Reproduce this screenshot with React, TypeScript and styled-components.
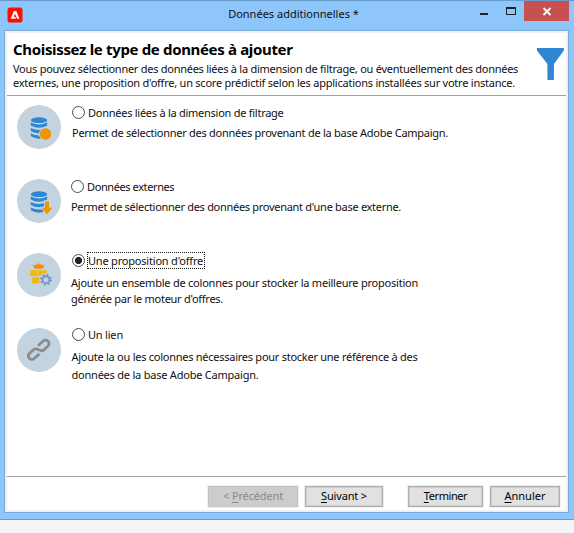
import React from 'react';
import styled, { createGlobalStyle } from 'styled-components';

const GlobalStyle = createGlobalStyle`
  * { box-sizing: border-box; }
  body {
    margin: 0;
    background: #f5f5f5;
    color: #101010;
    font: 11px/16px 'Noto Sans', 'Open Sans', sans-serif;
    overflow: hidden;
  }
`;

const Window = styled.main`
  width: 574px;
  height: 520px;
  display: flex;
  flex-direction: column;
  background: #8cc6fb;
  border-top: 1px solid #6b9bcb;
  border-bottom: 1px solid #6b9bcb;
  padding: 0 5px 6px 4px;
`;

const TitleBar = styled.header`
  height: 29px;
  flex: none;
  display: grid;
  grid-template-columns: 130px 1fr 130px;
`;

const AppLogo = styled.svg`
  width: 16px;
  height: 16px;
  margin: 6px 0 0 3px;
`;

const WindowTitle = styled.div`
  padding: 5px 0 0 14px;
  justify-self: center;
  white-space: nowrap;
`;

const WindowControls = styled.div`
  display: flex;
  justify-content: flex-end;
  align-items: flex-start;
`;

const ControlIcons = styled.svg`
  width: 50px;
  height: 20px;
`;

const CloseButton = styled.button`
  width: 45px;
  height: 20px;
  padding: 0;
  border: 0;
  background: #c75050;
  svg { display: block; }
`;

const Panel = styled.section`
  flex: 1;
  display: flex;
  flex-direction: column;
  border: 1px solid #7aaad8;
  background: #f0f0f0;
  padding: 2px;
`;

const Body = styled.div`
  flex: 1;
  display: flex;
  flex-direction: column;
  background: #fff;
`;

const Intro = styled.div`
  height: 63px;
  flex: none;
  display: flex;
  justify-content: space-between;
  border-bottom: 1px solid #a0a0a0;
  padding: 6px 0 0 6px;
`;

const Heading = styled.h1`
  margin: 0;
  font-size: 15px;
  line-height: 20px;
  letter-spacing: -0.34px;
  color: #000;
  white-space: nowrap;
`;

const IntroText = styled.div`
  padding-top: 3px;
  line-height: 14px;
`;

const Line = styled.div<{ $tracking: number }>`
  letter-spacing: ${(p) => p.$tracking}px;
  white-space: nowrap;
`;

const Funnel = styled.svg`
  width: 30px;
  height: 34px;
  margin-top: 8px;
  flex: none;
`;

const Options = styled.div`
  flex: 1;
  padding: 9px 0 0 10px;
`;

const Option = styled.div<{ $height: number }>`
  display: flex;
  gap: 10px;
  height: ${(p) => p.$height}px;
`;

const OptionIcon = styled.svg`
  width: 44px;
  height: 44px;
  flex: none;
`;

const OptionContent = styled.div<{ $lift: number }>`
  margin-top: -${(p) => p.$lift}px;
`;

const RadioLabel = styled.label<{ $indent: number }>`
  display: flex;
  align-items: center;
  gap: 2px;
  height: 17px;
  padding-left: ${(p) => p.$indent}px;
`;

const Radio = styled.input`
  appearance: none;
  width: 13px;
  height: 13px;
  margin: 0;
  border: 1px solid #4a4a4a;
  border-radius: 50%;
  background: #fff;
  outline: none;
  &:checked { background: radial-gradient(circle, #222 0 3.2px, #fff 3.9px); }
`;

const LabelText = styled.span<{ $tracking: number; $focused?: boolean }>`
  letter-spacing: ${(p) => p.$tracking}px;
  white-space: nowrap;
  height: 17px;
  line-height: 15px;
  border: 1px dotted ${(p) => (p.$focused ? '#111' : 'transparent')};
  ${(p) => p.$focused && 'width: 118px;'}
`;

const Description = styled.div<{ $top: number; $leading: number; $indent: number }>`
  margin-top: ${(p) => p.$top}px;
  padding-left: ${(p) => p.$indent}px;
  line-height: ${(p) => p.$leading}px;
`;

const Footer = styled.footer`
  height: 34px;
  flex: none;
  display: flex;
  justify-content: flex-end;
  border-top: 1px solid #a0a0a0;
  padding: 9px 6px 3px 0;
  gap: 7px;
`;

const Button = styled.button<{ $width: number; $tracking: number; $apart?: boolean }>`
  width: ${(p) => p.$width}px;
  height: 21px;
  margin-left: ${(p) => (p.$apart ? 18 : 0)}px;
  padding: 0 0 1px;
  border: 1px solid #adadad;
  box-shadow: 0 0 0 1px #f0f0f0, inset 0 0 0 1px #cfcfcf;
  background: #e1e1e1;
  color: #000;
  font: inherit;
  letter-spacing: ${(p) => p.$tracking}px;
  text-underline-offset: 2px;
  &:disabled {
    background: #ccc;
    border-color: #c2c2c2;
    color: #8a8a8a;
  }
`;

const Disc = () => <circle cx="22" cy="22" r="22" fill="#c3d4e0" />;

const Database = () => (
  <g fill="#2f86d1">
    <ellipse cx="22" cy="15.2" rx="8.2" ry="2.9" />
    <path d="M13.8 17.5q8.2 4.2 16.4 0v3q-8.2 4.4-16.4 0z" />
    <path d="M13.8 22.9q8.2 4.2 16.4 0v3.2q-8.2 4.4-16.4 0z" />
    <path d="M13.8 28.5q8.2 4.2 16.4 0v2.8q-8.2 4.8-16.4 0z" />
  </g>
);

const LinkedDataIcon = () => (
  <OptionIcon viewBox="0 0 44 44">
    <Disc />
    <Database />
    <circle cx="28.5" cy="29" r="6.2" fill="#f29400" stroke="#c3d4e0" />
  </OptionIcon>
);

const ExternalDataIcon = () => (
  <OptionIcon viewBox="0 0 44 44">
    <Disc />
    <Database />
    <path
      d="M28 22.5h4v6.2h3.2L30 35.2l-5.2-6.5H28z"
      fill="#f29400"
      stroke="#c3d4e0"
      strokeWidth="2"
      paintOrder="stroke"
    />
  </OptionIcon>
);

const OfferIcon = () => (
  <OptionIcon viewBox="0 0 44 44">
    <Disc />
    <path d="M17.8 15.8l-2.4-4 3.1 1 .4-2 1.5 1.2 1.2-2.2 1.2 2.2 1.5-1.2.4 2 3.1-1-2.4 4z" fill="#ee8c0c" />
    <path d="M13.2 17.3h6.9v5.8h-6.9zM21.2 17.3h8.6v3.4h-4.2v2.4h-4.4zM15.2 24.2h7.3v6.4h-7.3z" fill="#f2b90a" />
    <path d="M20.1 17.3h1.1v5.8h-1.1z" fill="#dfc04c" />
    <circle cx="29" cy="26.7" r="6.7" fill="#c3d4e0" />
    <g fill="none" stroke="#7595c8">
      <circle cx="29" cy="26.7" r="3.5" strokeWidth="1.9" />
      <circle cx="29" cy="26.7" r="5" strokeWidth="1.8" strokeDasharray="1.96 1.967" />
    </g>
  </OptionIcon>
);

const LinkIcon = () => (
  <OptionIcon viewBox="0 0 44 44">
    <Disc />
    <g transform="translate(21.7 21.8) rotate(-42)" fill="none" stroke="#8b8b8b" strokeWidth="2.8">
      <path d="M-2.2 3.5h-7a3.5 3.5 0 0 1 0-7h5.4a3.5 3.5 0 0 1 3.5 3.7" />
      <path d="M2.2-3.5h7a3.5 3.5 0 0 1 0 7H3.8A3.5 3.5 0 0 1 .3-.2" />
    </g>
  </OptionIcon>
);

type TextLine = [text: string, tracking: number];

interface OptionData {
  icon: React.ReactNode;
  label: TextLine;
  lines: TextLine[];
  height: number;
  lift: number;
  radioIndent: number;
  textIndent: number;
  top: number;
  leading: number;
  selected?: boolean;
}

const options: OptionData[] = [
  {
    icon: <LinkedDataIcon />,
    label: ['Données liées à la dimension de filtrage', -0.26],
    lines: [['Permet de sélectionner des données provenant de la base Adobe Campaign.', -0.26]],
    height: 74, lift: 1, radioIndent: 1, textIndent: 1, top: 4, leading: 16,
  },
  {
    icon: <ExternalDataIcon />,
    label: ['Données externes', -0.4],
    lines: [["Permet de sélectionner des données provenant d'une base externe.", -0.295]],
    height: 74, lift: 1, radioIndent: 0, textIndent: 0, top: 4, leading: 16,
  },
  {
    icon: <OfferIcon />,
    label: ["Une proposition d'offre", -0.2],
    lines: [
      ['Ajoute un ensemble de colonnes pour stocker la meilleure proposition', -0.228],
      ["générée par le moteur d'offres.", -0.28],
    ],
    height: 75, lift: 1, radioIndent: 1, textIndent: 0, top: 6, leading: 16, selected: true,
  },
  {
    icon: <LinkIcon />,
    label: ['Un lien', -0.2],
    lines: [
      ['Ajoute la ou les colonnes nécessaires pour stocker une référence à des', -0.26],
      ['données de la base Adobe Campaign.', -0.22],
    ],
    height: 60, lift: 2, radioIndent: 1, textIndent: 0.5, top: 5, leading: 18,
  },
];

export default function App() {
  return (
    <>
      <GlobalStyle />
      <Window>
        <TitleBar>
          <AppLogo viewBox="0 0 16 16">
            <rect x=".5" y=".5" width="15" height="15" rx="2.5" fill="#fa0f00" />
            <path d="M3.7 11.8L6.8 3.9h2.5l3.1 7.9h-2.3L8 6.8l-1.2 3h1.5l.8 2z" fill="#fff" />
          </AppLogo>
          <WindowTitle>Données additionnelles *</WindowTitle>
          <WindowControls>
            <ControlIcons viewBox="0 0 50 20">
              <path d="M6 12h8v2H6zM32 6h10v8H32zm1 2v5h8V8z" fill="#222" fillRule="evenodd" />
            </ControlIcons>
            <CloseButton aria-label="Fermer">
              <svg width="45" height="20" viewBox="0 0 45 20">
                <path d="M19.5 7l7 7m0-7l-7 7" stroke="#fff" strokeWidth="1.8" />
              </svg>
            </CloseButton>
          </WindowControls>
        </TitleBar>
        <Panel>
          <Body>
            <Intro>
              <div>
                <Heading>Choisissez le type de données à ajouter</Heading>
                <IntroText>
                  <Line $tracking={-0.265}>
                    Vous pouvez sélectionner des données liées à la dimension de filtrage, ou éventuellement des données
                  </Line>
                  <Line $tracking={-0.235}>
                    externes, une proposition d'offre, un score prédictif selon les applications installées sur votre instance.
                  </Line>
                </IntroText>
              </div>
              <Funnel viewBox="0 0 30 34">
                <path d="M.9 1h27v2.6L17.9 17v15.5l-.8.5h-5l-.7-.5V17L.9 3.6z" fill="#2f86d1" />
              </Funnel>
            </Intro>
            <Options>
              {options.map((o) => (
                <Option key={o.label[0]} $height={o.height}>
                  {o.icon}
                  <OptionContent $lift={o.lift}>
                    <RadioLabel $indent={o.radioIndent}>
                      <Radio type="radio" name="type" defaultChecked={o.selected} />
                      <LabelText $tracking={o.label[1]} $focused={o.selected}>{o.label[0]}</LabelText>
                    </RadioLabel>
                    <Description $top={o.top} $leading={o.leading} $indent={o.textIndent}>
                      {o.lines.map(([text, tracking]) => (
                        <Line key={text} $tracking={tracking}>{text}</Line>
                      ))}
                    </Description>
                  </OptionContent>
                </Option>
              ))}
            </Options>
            <Footer>
              <Button $width={90} $tracking={-0.15} disabled>&lt; <u>P</u>récédent</Button>
              <Button $width={78} $tracking={-0.15}><u>S</u>uivant &gt;</Button>
              <Button $width={75} $tracking={-0.42} $apart><u>T</u>erminer</Button>
              <Button $width={70} $tracking={0}><u>A</u>nnuler</Button>
            </Footer>
          </Body>
        </Panel>
      </Window>
    </>
  );
}
